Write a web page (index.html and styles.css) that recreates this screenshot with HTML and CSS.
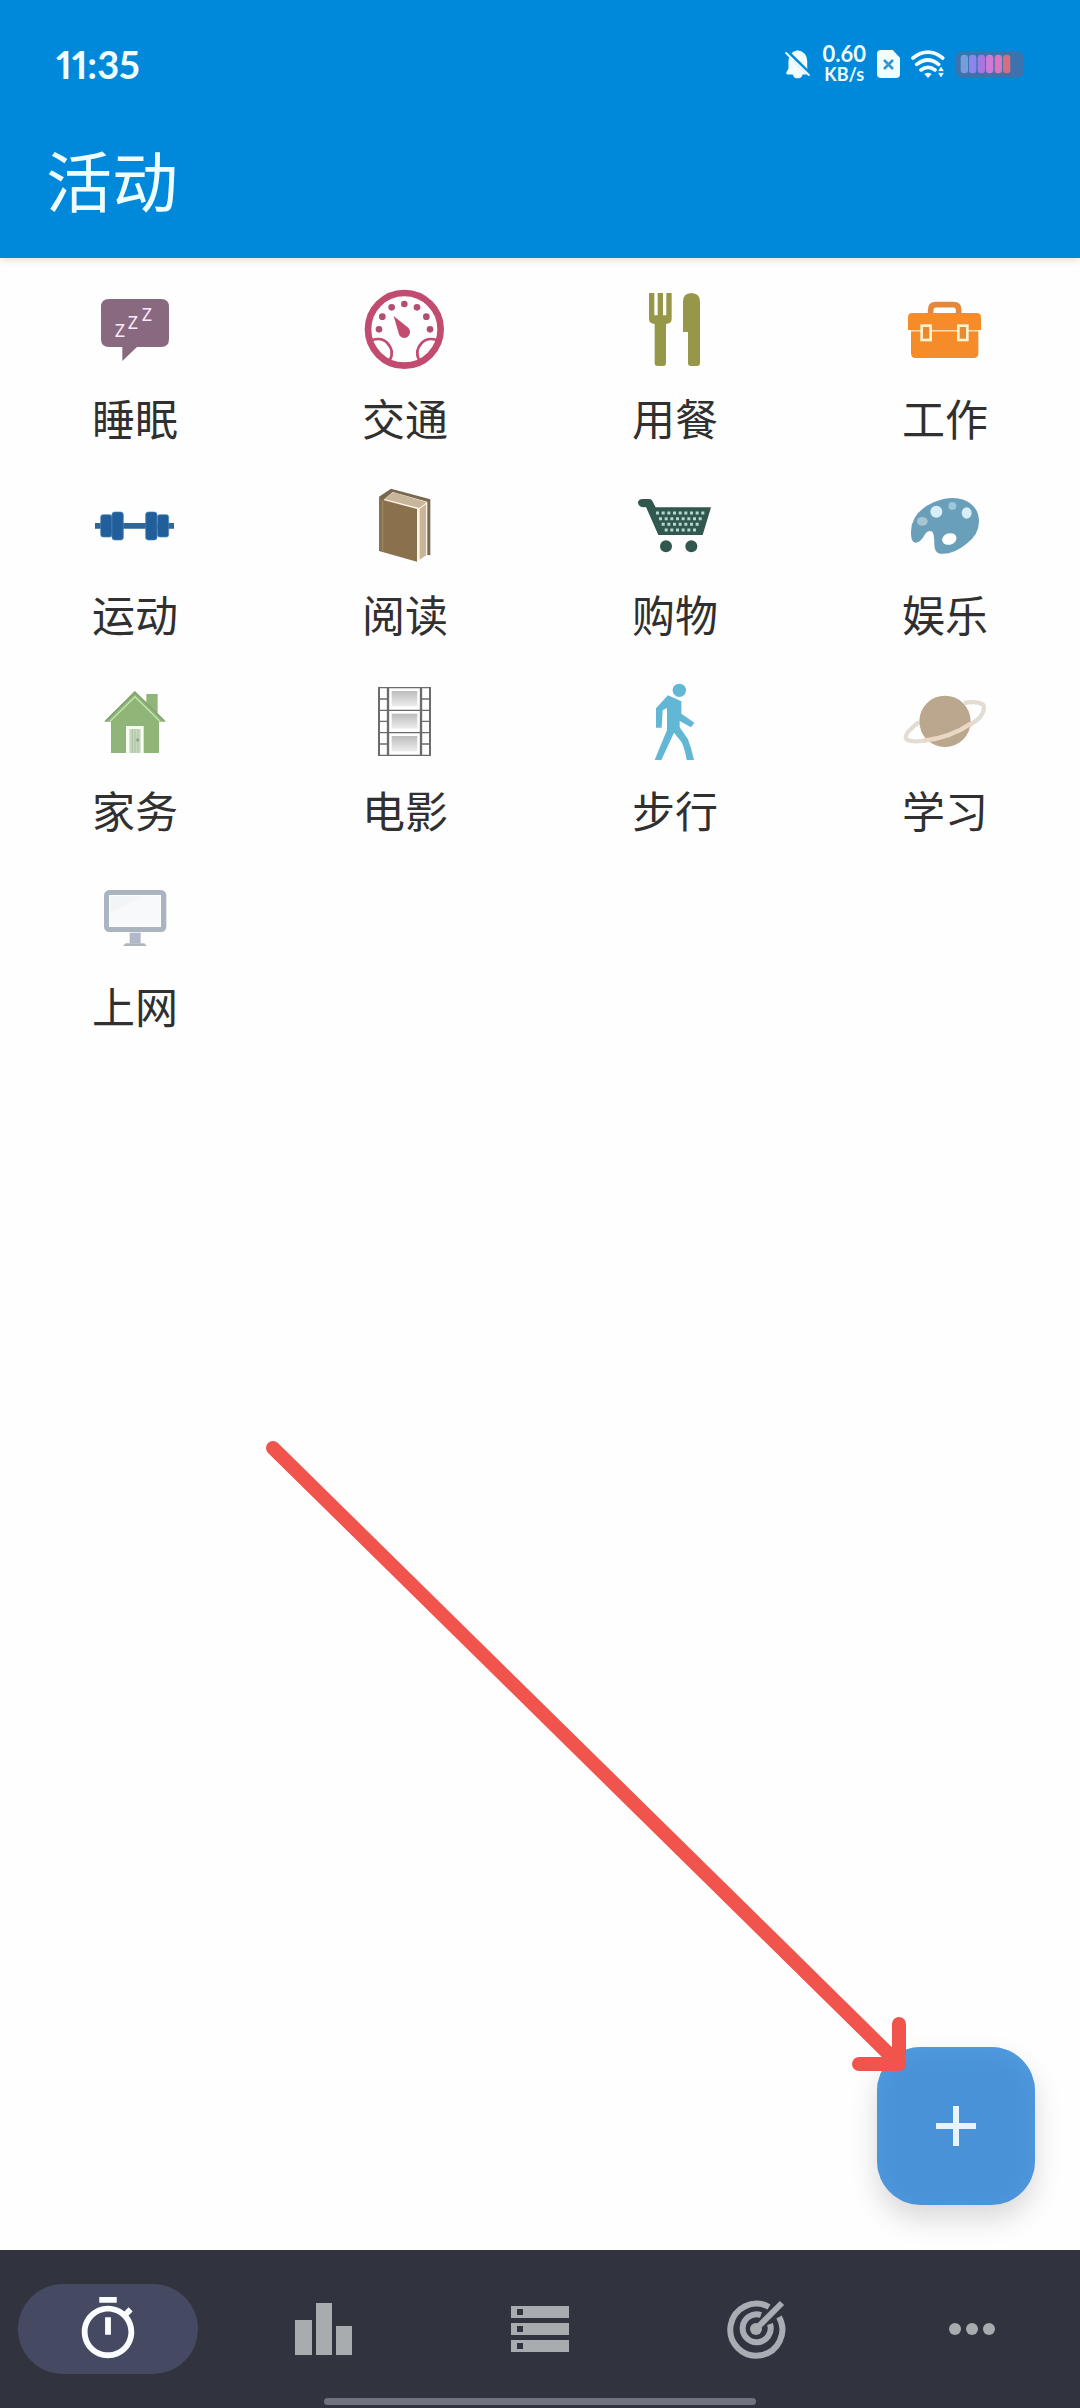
FILE: index.html
```html
<!DOCTYPE html>
<html lang="zh-CN">
<head>
<meta charset="utf-8">
<meta name="viewport" content="width=device-width, initial-scale=1">
<title>活动</title>
<link rel="stylesheet" href="styles.css">
</head>
<body>
<header class="app-bar">
  <div class="status">
    <time class="clock">11:35</time>
    <div class="indicators">
      <svg class="ind-bell" viewBox="78 58 78 88" aria-hidden="true">
        <path fill="#f0fdff" d="M84 132q-5-2-2-7l6-10V92q1-28 28-33 28 5 29 33v23l7 10q2 5-3 7h-18q-3 12-15 12t-15-12z"/>
        <path stroke="#0089db" stroke-width="13" d="M80 60l75 74"/>
        <path stroke="#f0fdff" stroke-width="6" stroke-linecap="round" d="M81 67l69 67"/>
      </svg>
      <div class="speed"><span class="rate">0.60</span><span class="unit">KB/s</span></div>
      <svg class="ind-sim" viewBox="354 60 69 84" aria-hidden="true">
        <path fill="#f0fdff" d="M366 60h35l22 23v49q0 12-12 12h-45q-12 0-12-12V72q0-12 12-12z"/>
        <path stroke="#3796c9" stroke-width="8" d="M375 90l27 27M402 90l-27 27"/>
      </svg>
      <svg class="ind-wifi" viewBox="456 60 102 84" aria-hidden="true">
        <g fill="none" stroke="#f0fdff" stroke-width="11" stroke-linecap="round">
          <path d="M462 84q45-35 89 0M473 103q34-26 66 0M486 120q21-16 42 0"/>
        </g>
        <path fill="#f0fdff" d="M496 132q11-8 22 0l-11 12z"/>
        <path fill="#f0fdff" stroke="#0089db" stroke-width="3" d="M535 125l11-18 11 18zM535 127l11 18 11-18z"/>
      </svg>
      <svg class="ind-battery" viewBox="588 63 204 81" aria-hidden="true">
        <rect x="588" y="63" width="202" height="81" rx="18" fill="#3a73ad"/>
        <rect x="602" y="74" width="22" height="56" rx="10" fill="#799ddb"/>
        <rect x="627" y="74" width="22" height="56" rx="10" fill="#8b87ef"/>
        <rect x="653" y="74" width="22" height="56" rx="10" fill="#a578df"/>
        <rect x="678" y="74" width="22" height="56" rx="10" fill="#ce7bd5"/>
        <rect x="704" y="74" width="22" height="56" rx="10" fill="#d978b8"/>
        <rect x="729" y="74" width="22" height="56" rx="10" fill="#d96d80"/>
      </svg>
    </div>
  </div>
  <h1 class="title">活动</h1>
</header>

<main class="content">
  <ul class="activities">
    <li><button class="activity" type="button">
      <svg class="activity-icon" viewBox="99 54 252 252" aria-hidden="true">
        <path fill="#88697f" d="M147 87h156q24 0 24 24v96q0 24-24 24h-72l-44 42v-42h-40q-24 0-24-24v-96q0-24 24-24z"/>
        <g class="zzz"><text x="164" y="202">Z</text><text x="203" y="177">Z</text><text x="245" y="152">Z</text></g>
      </svg>
      <span class="label">睡眠</span></button></li>
    <li><button class="activity" type="button">
      <svg class="activity-icon" viewBox="909 54 252 252" aria-hidden="true">
        <g fill="none" stroke="#c24c70">
          <circle cx="1033" cy="178" r="109" stroke-width="20"/>
          <path stroke-width="8" d="M937 210q28-9 45 9 22 23 8 51M1130 210q-28-9-45 9-22 23-8 51"/>
        </g>
        <g fill="#b34e70">
          <circle cx="957" cy="178" r="10"/><circle cx="967" cy="140" r="10"/><circle cx="995" cy="112" r="10"/><circle cx="1033" cy="102" r="10"/><circle cx="1071" cy="112" r="10"/><circle cx="1099" cy="140" r="10"/><circle cx="1110" cy="178" r="10"/>
        </g>
        <path fill="#c24c70" d="M1001 138l42 34q10 9 6 20-5 12-17 12-13-1-16-14z"/>
      </svg>
      <span class="label">交通</span></button></li>
    <li><button class="activity" type="button">
      <svg class="activity-icon" viewBox="99 54 252 252" aria-hidden="true">
        <g fill="#97974a">
          <path d="M147 69h16v67h10V69h16v67h10V69h16v78q0 14-17 15v117q0 9-9 9h-16q-9 0-9-9V162q-17-1-17-15z"/>
          <path d="M249 186V95q0-25 25-26 26 1 26 26v184q0 9-9 9h-18q-9 0-9-9v-93z"/>
        </g>
      </svg>
      <span class="label">用餐</span></button></li>
    <li><button class="activity" type="button">
      <svg class="activity-icon" viewBox="909 54 252 252" aria-hidden="true">
        <path fill="none" stroke="#e8873a" stroke-width="17" d="M992 133v-13q0-16 16-16h52q16 0 16 16v13"/>
        <path fill="#f58b29" d="M937 129h193q13 0 13 13v38H924v-38q0-13 13-13zM933 184h202v66q0 14-14 14H947q-14 0-14-14z"/>
        <path fill="#ffd9a8" d="M933 180h202v4H933z"/>
        <g fill="#e98a33" stroke="#fff3cf" stroke-width="8"><rect x="965" y="167" width="27" height="43"/><rect x="1075" y="167" width="27" height="43"/></g>
      </svg>
      <span class="label">工作</span></button></li>
    <li><button class="activity" type="button">
      <svg class="activity-icon" viewBox="99 42 252 252" aria-hidden="true">
        <path fill="#2d6699" d="M105 159h237v17H105z"/>
        <g fill="#225e99" stroke="#4b86bd" stroke-width="2"><rect x="122" y="134" width="34" height="67" rx="7"/><rect x="292" y="134" width="34" height="67" rx="7"/><rect x="156" y="126" width="34" height="84" rx="8"/><rect x="257" y="126" width="34" height="84" rx="8"/></g>
      </svg>
      <span class="label">运动</span></button></li>
    <li><button class="activity" type="button">
      <svg class="activity-icon" viewBox="909 42 252 252" aria-hidden="true">
        <path fill="#76694f" d="M957 80l36-24 118 32v168l-12-2-130-160z"/>
        <path fill="#fff4e8" d="M971 89l27-23 104 29v159l-32 20z"/>
        <path fill="#c8b59a" d="M973 87l26-20 101 30-22 17zM1079 117l19-15v154l-19 13z"/>
        <path fill="#8b704c" d="M957 80l13 10 101 27v158l-114-32z"/>
        <path stroke="#a18c68" stroke-width="3" d="M968 92v152"/>
      </svg>
      <span class="label">阅读</span></button></li>
    <li><button class="activity" type="button">
      <svg class="activity-icon" viewBox="99 42 252 252" aria-hidden="true">
        <g fill="#31574e">
          <path d="M126 87h22q6 0 9 6l10 19h166l-25 83H175l-37-84q-12 2-19-3-6-6-5-13 3-8 12-8z"/>
          <circle cx="198" cy="229" r="18"/><circle cx="274" cy="229" r="18"/>
        </g>
        <g fill="none" stroke="#b3d8cf" stroke-width="9" stroke-dasharray="9 8">
          <path d="M168 129h145M177 146h128M185 163h111M194 180h94"/>
        </g>
      </svg>
      <span class="label">购物</span></button></li>
    <li><button class="activity" type="button">
      <svg class="activity-icon" viewBox="909 42 252 252" aria-hidden="true">
        <path fill="#699fb8" d="M1001 97q49-21 90-8 46 19 46 66 0 38-39 68-39 32-78 28-17-3-17-29 0-36-9-38-11-4-19 9-14 26-29 25-14-1-13-33 1-59 68-88z"/>
        <g fill="#d8eef8"><circle cx="1009" cy="125" r="18"/><ellipse cx="1100" cy="129" rx="15" ry="17"/></g>
        <ellipse cx="967" cy="154" rx="16" ry="13" fill="#a9c5d2"/>
        <circle cx="1057" cy="108" r="12" fill="#9bc7dc"/>
        <ellipse cx="1048" cy="207" rx="22" ry="17" fill="#fff" transform="rotate(-18 1048 207)"/>
      </svg>
      <span class="label">娱乐</span></button></li>
    <li><button class="activity" type="button">
      <svg class="activity-icon" viewBox="99 30 252 252" aria-hidden="true">
        <path fill="#8fb578" d="M259 72h34v58l24 25h-20v94H153v-94h-21l92-92 35 34z"/>
        <path fill="none" stroke="#86a373" stroke-width="5" d="M137 153l88-86 88 86"/>
        <path fill="none" stroke="#c2e8aa" stroke-width="4" d="M151 153l74-73 74 73"/>
        <path fill="#f8fff3" d="M198 168h53v81h-53z"/>
        <path fill="#c7d8be" d="M208 177h34v72h-34z"/>
        <path stroke="#adc2a3" stroke-width="3" d="M217 178v71M225 178v71M234 178v71"/>
        <circle cx="233" cy="210" r="5" fill="#92a98a"/>
      </svg>
      <span class="label">家务</span></button></li>
    <li><button class="activity" type="button">
      <svg class="activity-icon" viewBox="909 30 252 252" aria-hidden="true">
        <defs><linearGradient id="frame" x2="0" y2="1"><stop stop-color="#bcbcbc"/><stop offset="1" stop-color="#eee"/></linearGradient></defs>
        <g fill="none" stroke="#6b6b6b" stroke-width="4">
          <path d="M954 53h159M954 256h159M985 121h98M985 188h98M957 87h27M957 121h27M957 154h27M957 188h27M957 222h27M1085 87h27M1085 121h27M1085 154h27M1085 188h27M1085 222h27"/>
          <path stroke-width="6" d="M957 51v207M1110 51v207"/><path stroke-width="7" d="M984 51v207M1083 51v207"/>
        </g>
        <g fill="url(#frame)"><path d="M995 63h77v46h-77z"/><path d="M995 131h77v45h-77z"/><path d="M995 198h77v46h-77z"/></g>
      </svg>
      <span class="label">电影</span></button></li>
    <li><button class="activity" type="button">
      <svg class="activity-icon" viewBox="99 30 252 252" aria-hidden="true">
        <g fill="#62b7d5">
          <circle cx="238" cy="61" r="20"/>
          <path d="M204 76l40 18v37l39 27-10 14-34-19v19l25 36q10 27 18 62h-22q-5-31-15-53l-23-29-38 82h-20l37-90V114l-13 7-3 52h-17v-58z"/>
        </g>
      </svg>
      <span class="label">步行</span></button></li>
    <li><button class="activity" type="button">
      <svg class="activity-icon" viewBox="909 30 252 252" aria-hidden="true">
        <path fill="none" stroke="#e3dcd3" stroke-width="13" d="M957 156q-48 37-38 51 14 14 80 0 88-20 138-62 23-30 11-42-18-11-56-4"/>
        <circle cx="1035" cy="154" r="77" fill="#baa78e"/>
        <path fill="none" stroke="#ead7c4" stroke-width="13" d="M972 212q78-9 142-52"/>
      </svg>
      <span class="label">学习</span></button></li>
    <li><button class="activity" type="button">
      <svg class="activity-icon" viewBox="99 48 252 252" aria-hidden="true">
        <rect x="132" y="90" width="187" height="126" rx="16" fill="#abb4c1"/>
        <path fill="#f1f5f8" stroke="#fff" stroke-width="4" d="M149 107h152v92H149z"/>
        <path fill="#f7f9fb" d="M151 160l92-51h56v88H151z"/>
        <path fill="#b0b8ca" d="M209 218h33v32h-33z"/><path fill="#aeb6bd" d="M197 250h56l7 8h-71z"/>
      </svg>
      <span class="label">上网</span></button></li>
  </ul>

  <button class="fab" type="button" aria-label="添加">
    <svg class="fab-icon" viewBox="0 0 40 40" aria-hidden="true"><path stroke="#e8f4fd" stroke-width="6" d="M20 0v40M0 20h40"/></svg>
  </button>
  <svg class="pointer" viewBox="0 0 640 630" aria-hidden="true">
    <path d="M7 7l626 616M633 583v40h-40"/>
  </svg>
</main>

<nav class="tabs">
  <a class="tab active" href="#timer" aria-label="计时">
    <svg class="tab-icon" viewBox="0 0 24 24" aria-hidden="true"><path d="M15 1H9v2h6V1zm-4 13h2V8h-2v6zm8.030-6.610l1.420-1.420c-.43-.51-.9-.99-1.410-1.410l-1.420 1.420C16.070 4.740 14.120 4 12 4c-4.970 0-9 4.030-9 9s4.020 9 9 9 9-4.030 9-9c0-2.120-.74-4.070-1.970-5.610zM12 20c-3.870 0-7-3.130-7-7s3.130-7 7-7 7 3.130 7 7-3.130 7-7 7z"/></svg>
  </a>
  <a class="tab" href="#stats" aria-label="统计">
    <svg class="tab-icon" viewBox="0 0 70 70" aria-hidden="true"><path d="M6 26h17v35H6zM27 9h16v52H27zM47 32h16v29H47z"/></svg>
  </a>
  <a class="tab" href="#records" aria-label="记录">
    <svg class="tab-icon" viewBox="0 0 70 70" aria-hidden="true"><path fill-rule="evenodd" d="M6 12h58v12H6zM12 15v6h6v-6zM6 29h58v12H6zM12 32v6h6v-6zM6 46h58v12H6zM12 49v6h6v-6z"/></svg>
  </a>
  <a class="tab" href="#goals" aria-label="目标">
    <svg class="tab-icon" viewBox="0 0 70 70" aria-hidden="true">
      <g fill="none" stroke="#a9acb3" stroke-width="6"><path d="M48 13A26 26 0 1 0 58 23"/><path d="M40 21A14 14 0 1 0 49 30"/><path d="M35 35l26-26"/></g><circle cx="35" cy="35" r="6"/>
    </svg>
  </a>
  <a class="tab" href="#more" aria-label="更多">
    <svg class="tab-icon" viewBox="0 0 70 70" aria-hidden="true"><circle cx="18" cy="35" r="6"/><circle cx="35" cy="35" r="6"/><circle cx="52" cy="35" r="6"/></svg>
  </a>
  <span class="home-bar"></span>
</nav>
</body>
</html>
```
FILE: styles.css
```css
* { box-sizing: border-box; }

body {
  margin: 0;
  min-height: 100vh;
  display: flex;
  flex-direction: column;
  background: #fefefe;
  color: #303030;
  font-family: "Noto Sans CJK SC", sans-serif;
}

svg { display: block; }

button {
  border: 0;
  padding: 0;
  background: none;
  color: inherit;
  font: inherit;
  cursor: pointer;
}

.app-bar {
  position: relative;
  z-index: 1;
  background: #0089db;
  color: #f0fdff;
  box-shadow: 0 2px 8px rgba(0, 0, 0, 0.12);
  padding-bottom: 29px;
}

.status {
  display: flex;
  justify-content: space-between;
  align-items: center;
  height: 128px;
  padding: 0 56px;
  font-family: Lato, sans-serif;
  font-weight: 700;
}

.clock {
  font-size: 38px;
  line-height: 40px;
  font-variant-numeric: proportional-nums;
}

.indicators { display: flex; align-items: center; gap: 11px; }

.ind-bell { width: 26px; height: 29px; }
.ind-sim { width: 23px; height: 28px; }
.ind-wifi { width: 34px; height: 28px; }
.ind-battery { width: 68px; height: 27px; }

.speed {
  display: flex;
  flex-direction: column;
  align-items: center;
  line-height: 21px;
}

.rate { font-size: 22px; }
.unit { font-size: 18px; }

.title {
  margin: 0;
  padding: 0 46px;
  font-size: 66px;
  line-height: 101px;
  font-weight: 400;
}

.content { position: relative; flex: 1; }

.activities {
  list-style: none;
  margin: 0;
  padding: 30px 0;
  display: grid;
  grid-template-columns: repeat(4, 1fr);
  row-gap: 39px;
}

.activity {
  width: 100%;
  display: flex;
  flex-direction: column;
  align-items: center;
  gap: 17px;
}

.activity-icon { width: 84px; height: 84px; }

.zzz {
  fill: #ffe9fb;
  font-family: "Noto Sans", sans-serif;
  font-size: 54px;
}

.label { font-size: 43px; line-height: 56px; }

.fab {
  position: absolute;
  right: 45px;
  bottom: 45px;
  width: 158px;
  height: 158px;
  border-radius: 44px;
  display: grid;
  place-items: center;
  background: #4a92d8;
  box-shadow: 0 14px 28px rgba(0, 0, 0, 0.15), inset 0 6px 24px #519bdf;
}

.fab-icon { width: 40px; height: 40px; }

/* Hint arrow that leads to the add button */
.pointer {
  position: absolute;
  right: 174px;
  bottom: 179px;
  width: 640px;
  height: 630px;
  fill: none;
  stroke: #f0544c;
  stroke-width: 14px;
  stroke-linecap: round;
  stroke-linejoin: round;
  pointer-events: none;
}

.tabs {
  position: relative;
  display: grid;
  grid-template-columns: repeat(5, 1fr);
  padding: 34px 0;
  background: #31343f;
}

.tab {
  height: 90px;
  margin: 0 18px;
  border-radius: 45px;
  display: grid;
  place-items: center;
}

.tab.active { background: #454a62; }

.tab-icon { width: 70px; height: 70px; fill: #a9acaf; }
.tab.active .tab-icon { fill: #fafdff; }

.home-bar {
  position: absolute;
  left: 30%;
  right: 30%;
  bottom: 3px;
  height: 7px;
  border-radius: 4px;
  background: #70737f;
}
```
